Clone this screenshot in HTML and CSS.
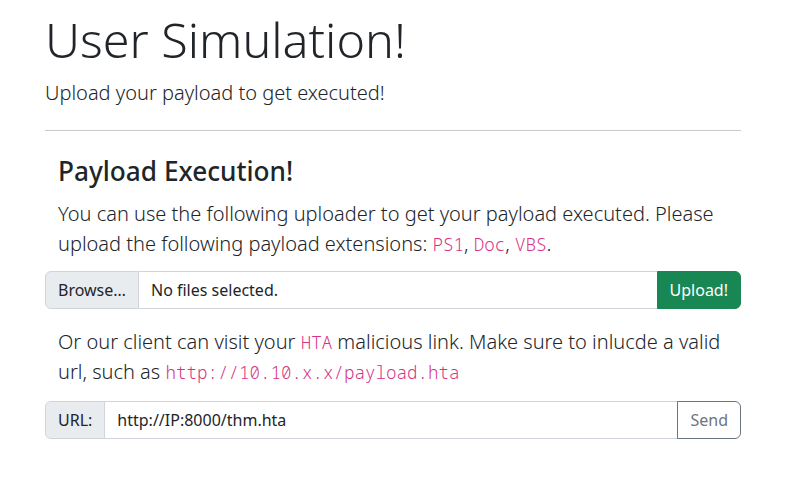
FILE: index.html
```html
<!DOCTYPE html>
<html lang="en">
<head>
<meta charset="utf-8">
<title>User Simulation!</title>
<link rel="stylesheet" href="styles.css">
</head>
<body>
<div class="container">
  <header class="hero">
    <h1 class="display">User Simulation!</h1>
    <p class="lead sub">Upload your payload to get executed!</p>
  </header>
  <hr class="rule">
  <section class="section first">
    <h3 class="title">Payload Execution!</h3>
    <p class="lead">You can use the following uploader to get your payload executed. Please upload the following payload extensions: <code>PS1</code>, <code>Doc</code>, <code>VBS</code>.</p>
  </section>
  <div class="input-group">
    <span class="addon">Browse…</span>
    <span class="field">No files selected.</span>
    <button class="btn btn-success">Upload!</button>
  </div>
  <section class="section second">
    <p class="lead">Or our client can visit your <code>HTA</code> malicious link. Make sure to inlucde a valid url, such as <code>http://10.10.x.x/payload.hta</code></p>
  </section>
  <div class="input-group">
    <span class="addon">URL:</span>
    <span class="field">http://IP:8000/thm.hta</span>
    <button class="btn btn-outline">Send</button>
  </div>
</div>
</body>
</html>
```
FILE: styles.css
```css
html, body {
  margin: 0;
  padding: 0;
  background: #fff;
}
body {
  font-family: "Noto Sans", sans-serif;
  color: #212529;
  font-size: 16px;
  line-height: 1.5;
}
.container {
  width: 696px;
  margin-left: 45px;
  padding-top: 10px;
}
.display {
  font-size: 48.5px;
  font-weight: 300;
  line-height: 1.2;
  margin: 0 0 10px;
}
.rule {
  border: 0;
  border-top: 1px solid #c8c9ca;
  margin: 22px 0 16px;
}
.section {
  padding: 0 13px;
}
.section.first {
  padding-top: 9px;
}
.title {
  font-size: 26.2px;
  font-weight: 500;
  line-height: 1.2;
  margin: 0 0 11px;
}
.lead {
  font-size: 20px;
  font-weight: 300;
  line-height: 1.5;
  margin: 0 0 12px;
}
.lead.sub {
  margin: 0;
}
.section.second {
  padding-top: 2px;
}
.section.second .lead {
  margin-bottom: 14px;
}
code {
  font-family: "Noto Sans Mono", "DejaVu Sans Mono", monospace;
  font-size: 0.875em;
  font-weight: 300;
  color: #d63384;
}
.input-group {
  display: flex;
  align-items: stretch;
  margin-bottom: 16px;
  height: 38px;
}
.addon {
  display: flex;
  align-items: center;
  padding: 6px 12px;
  background: #e9ecef;
  border: 1px solid #ced4da;
  border-radius: 6px 0 0 6px;
  font-size: 16px;
}
.field {
  flex: 1;
  display: flex;
  align-items: center;
  padding: 6px 12px;
  border: 1px solid #ced4da;
  border-left: 0;
  font-size: 16px;
}
.btn {
  font-family: inherit;
  font-size: 16px;
  padding: 6px 12px;
  border-radius: 0 6px 6px 0;
  margin-left: -1px;
  cursor: pointer;
}
.btn-success {
  background: #198754;
  border: 1px solid #198754;
  color: #fff;
}
.btn-outline {
  background: #fff;
  border: 1px solid #6c757d;
  color: #6c757d;
}
```
